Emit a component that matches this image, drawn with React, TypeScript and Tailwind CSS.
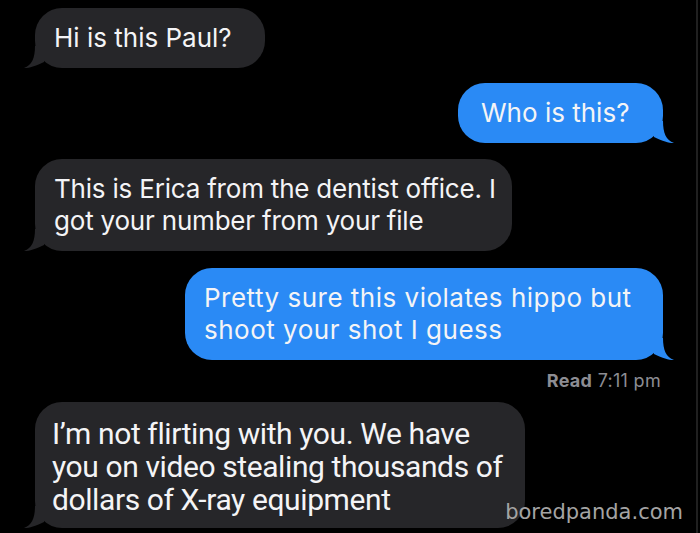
import React from 'react';

type Side = 'in' | 'out';

const Tail = ({ side, color }: { side: Side; color: string }) => (
  <svg
    width="22"
    height="22"
    viewBox="0 0 22 22"
    className={
      side === 'out'
        ? 'absolute bottom-0 right-[-11px]'
        : 'absolute bottom-0 left-[-11px] -scale-x-100'
    }
  >
    <path d="M2 0 L11 0 C11 12 14 19 22 22 C16 22 11 20 2 16 Z" fill={color} />
  </svg>
);

const Bubble = ({
  side,
  width,
  pl,
  lines,
  className = '',
}: {
  side: Side;
  width: string;
  pl: string;
  lines: string[];
  className?: string;
}) => {
  const color = side === 'out' ? '#2a8af5' : '#262629';
  return (
    <div
      className={`relative ${width} ${pl} py-[14px] rounded-[27px] ${
        side === 'out' ? 'self-end bg-[#2a8af5]' : 'self-start bg-[#262629]'
      } ${className}`}
    >
      <Tail side={side} color={color} />
      <p className="relative text-[#f4f4f6]">
        {lines.map((l, i) => (
          <span key={i} className="block whitespace-nowrap">
            {l}
          </span>
        ))}
      </p>
    </div>
  );
};

const App = () => {
  return (
    <div className="w-[700px] h-[533px] bg-black flex overflow-hidden relative">
      <div
        className="flex-1 flex flex-col px-[35px] pt-[8px] text-[26px] leading-[32px]"
        style={{ fontFamily: 'Inter, "Liberation Sans", sans-serif' }}
      >
        <Bubble side="in" width="w-[230px]" pl="pl-[19px]" lines={['Hi is this Paul?']} />
        <Bubble
          side="out"
          width="w-[205px]"
          pl="pl-[23px]"
          lines={['Who is this?']}
          className="mt-[15px] mr-[-2px]"
        />
        <Bubble
          side="in"
          width="w-[477px]"
          pl="pl-[19px]"
          lines={['This is Erica from the dentist office. I', 'got your number from your file']}
          className="mt-[16px] tracking-[-0.2px]"
        />
        <Bubble
          side="out"
          width="w-[478px]"
          pl="pl-[19px]"
          lines={['Pretty sure this violates hippo but', 'shoot your shot I guess']}
          className="mt-[17px] mr-[-2px] tracking-[0.5px]"
        />
        <div className="self-end mt-[10px] text-[18px] leading-[22px] text-[#8d8d93] tracking-[0.3px]">
          <span className="font-bold">Read</span> 7:11 pm
        </div>
        <div
          className="relative self-start w-[490px] pl-[17px] pt-[15px] pb-[12px] rounded-[27px] bg-[#262629] mt-[10px] text-[30px] leading-[33px] text-[#f4f4f6] tracking-[-0.4px]"
          style={{ fontFamily: 'Roboto, "Liberation Sans", sans-serif' }}
        >
          <Tail side="in" color="#262629" />
          <p className="relative">
            <span className="block whitespace-nowrap">I’m not flirting with you. We have</span>
            <span className="block whitespace-nowrap">you on video stealing thousands of</span>
            <span className="block whitespace-nowrap">dollars of X-ray equipment</span>
          </p>
        </div>
      </div>
      <div className="w-[2px] bg-[#202020] mr-[2px]" />
      <div
        className="absolute right-[17px] bottom-[9px] text-[21px] leading-[24px] text-[#a4a4a4]"
        style={{ fontFamily: '"DejaVu Sans", sans-serif' }}
      >
        boredpanda.com
      </div>
    </div>
  );
};

export default App;
